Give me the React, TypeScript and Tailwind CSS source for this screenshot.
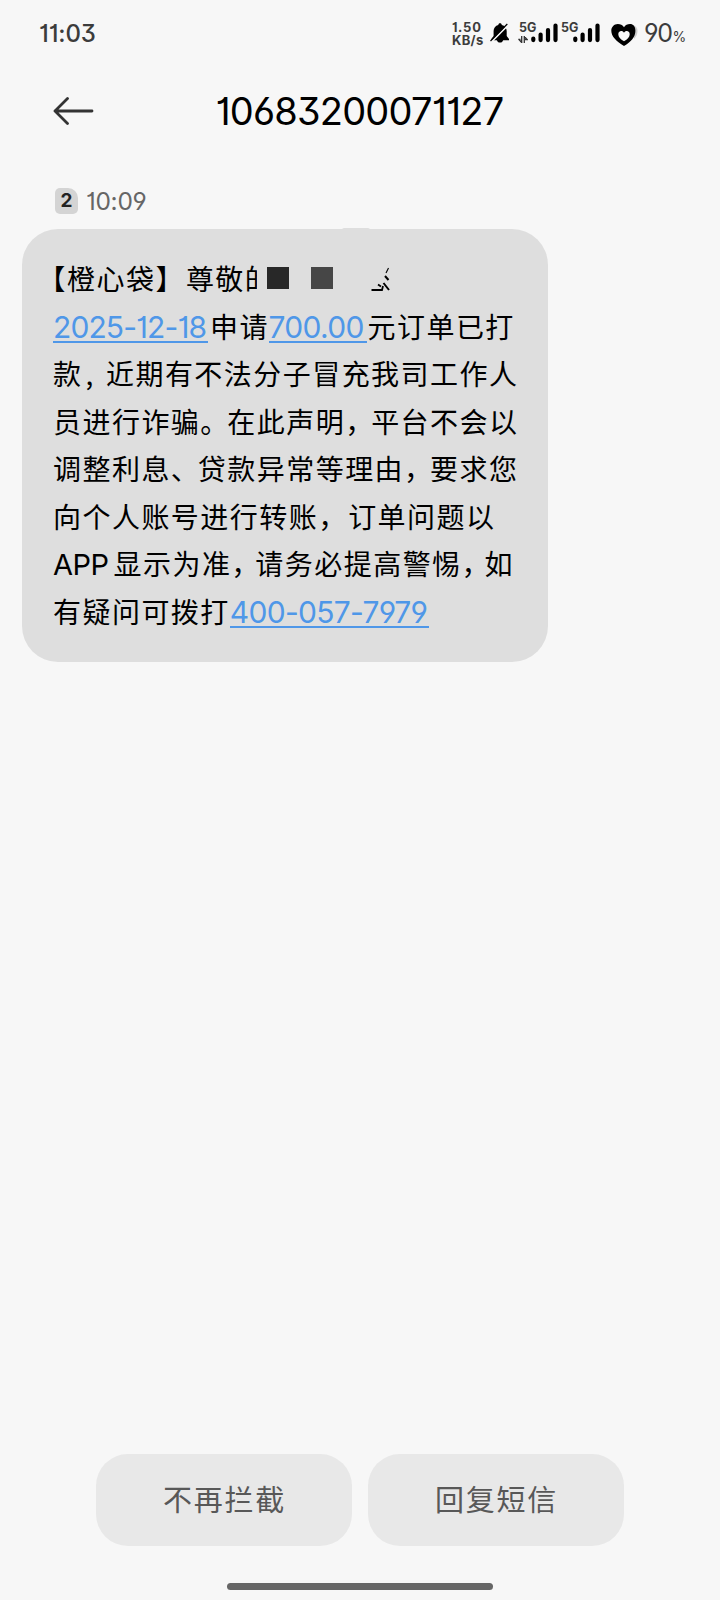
import type { ReactNode } from 'react'
import { clsx } from 'clsx'

const digits = "font-['Inter','Noto_Sans_CJK_SC',sans-serif] [font-feature-settings:'cv01','cv03','cv04','cv09']"

function BellOffIcon() {
  return (
    <svg width="20" height="20" viewBox="0 0 20 20" className="shrink-0">
      <path
        d="M10 0.3c1 0 1.700.7 1.800 1.600 3 .7 4.900 3 4.900 6v5l2.300 3v1.400H1.300v-1.400l2.300-3V8c0-3.100 1.800-5.400 4.700-6.100C8.400 1 9 .3 10 .3z"
        fill="#000"
      />
      <path d="M6.800 17h6.400c-.4 1.700-1.600 2.600-3.200 2.600S7.200 18.700 6.800 17z" fill="#000" />
      <path d="M1.200 19.200L18.800 1.400" stroke="#f7f7f7" strokeWidth="1.700" />
      <path d="M0.500 18L17.300 1" stroke="#000" strokeWidth="1.200" />
    </svg>
  )
}

function SignalBars() {
  return (
    <svg width="27" height="20" viewBox="0 0 27 20" stroke="#000" strokeWidth="4.200" strokeLinecap="round">
      <path d="M2.300 15.500v1.600M9.600 11.500v5.600M17 7v10.100M24.500 2.500v14.600" />
    </svg>
  )
}

function DataArrows() {
  return (
    <svg width="10" height="7" viewBox="0 0 10 7" fill="none" stroke="#333" strokeWidth="1.300">
      <path d="M0.300 3.300h2.200M3.700 0v7M3.700 6.500L1 3.500M6.300 7V0M6.300 .5L9.200 3.500H7" />
    </svg>
  )
}

function HeartIcon() {
  return (
    <svg width="27" height="24" viewBox="0 0 27 24" className="shrink-0">
      <path d="M22 2c3 1 4.500 3 4.500 6 0 3-1.500 6-3.500 8z" fill="#ccc" />
      <path
        d="M13 23C5.500 18.500.3 13.500.3 7.800.3 3.800 3.200 1 6.800 1c2.600 0 4.800 1.200 6.200 3.200C14.400 2.200 16.400 1 19 1c3.200 0 5.400 2.300 5.400 6.800C24.400 14 20 19 13 23z"
        fill="#000"
      />
      <path
        d="M13 18.300c-3.600-2.300-5.700-4.500-5.700-7.100 0-1.800 1.200-3.100 2.900-3.100 1.200 0 2.200.6 2.800 1.600.6-1 1.600-1.600 2.800-1.600 1.700 0 2.900 1.300 2.900 3.100 0 2.600-2.100 4.800-5.700 7.100z"
        fill="#f7f7f7"
      />
    </svg>
  )
}

function StatusBar() {
  return (
    <header className={clsx(digits, 'flex h-[66px] items-start pl-[39px] text-[#3c3c3c]')}>
      <span className="mt-[18px] w-[413px] text-[24px] leading-[31px] font-medium tracking-[-0.1px]">11:03</span>
      <div className="mt-[21px] w-[38px] text-[13px] leading-[12.5px] font-bold">
        <div className="tracking-[0.9px]">1.50</div>
        <div className="tracking-[0.3px]">KB/s</div>
      </div>
      <div className="mt-[23px] w-[28px]">
        <BellOffIcon />
      </div>
      <div className="relative mt-[23px] w-[42px] pl-[13px]">
        <SignalBars />
        <span className="absolute top-[-2px] left-[1px] text-[12.5px] leading-[14px] font-bold">5G</span>
        <span className="absolute top-[13px] left-0">
          <DataArrows />
        </span>
      </div>
      <div className="relative mt-[23px] w-[51px] pl-[12.5px]">
        <SignalBars />
        <span className="absolute top-[-2px] left-[1px] text-[12.5px] leading-[14px] font-bold">5G</span>
      </div>
      <div className="mt-[23px] w-[33px]">
        <HeartIcon />
      </div>
      <div className="mt-[18px] flex items-baseline leading-[31px]">
        <span className="w-[28.5px] text-[25px] tracking-[-1.3px]">90</span>
        <span className="text-[14px]">%</span>
      </div>
    </header>
  )
}

function TitleBar() {
  return (
    <div className="flex h-[90px] items-center pl-[53px]">
      <svg width="41" height="28" viewBox="0 0 41 28" fill="none" stroke="#333" strokeWidth="2.800" strokeLinecap="round" strokeLinejoin="round">
        <path d="M39 14H2M14.500 1.500L2 14l12.500 12.500" />
      </svg>
      <h1 className={clsx(digits, 'ml-[121.5px] text-[38px] leading-[46px] tracking-[-0.8px] text-black')}>
        10683200071127
      </h1>
    </div>
  )
}

function Line({ children }: { children: ReactNode }) {
  return <div className="flex h-[47.5px] items-center whitespace-pre">{children}</div>
}

function Gap({ className, children }: { className: string; children?: ReactNode }) {
  return <span className={clsx('shrink-0', className)}>{children}</span>
}

function LinkText({ className, children }: { className: string; children: ReactNode }) {
  return (
    <a
      className={clsx(
        digits,
        'block h-[33px] shrink-0 border-b-2 border-[#4f97e8] text-[30px] leading-[35px] text-[#4f97e8]',
        className
      )}
    >
      {children}
    </a>
  )
}

function Message() {
  return (
    <div className="relative ml-[22px] h-[433px] w-[526px] rounded-[36px] bg-[#dedede] pt-[26px] pl-[31px] font-['Noto_Sans_CJK_SC',sans-serif] text-[28px] leading-[47.5px] tracking-[1.46px] text-black">
      <span className="absolute top-[-1px] left-[320px] h-[2px] w-[28px] rounded-t-full bg-[#dedede]" />
      <Line>
        <Gap className="flex w-[14px] justify-end">【</Gap>
        橙心袋
        <Gap className="w-[30.5px]">】</Gap>
        尊敬
        <Gap className="w-[12px] overflow-hidden">的</Gap>
        <Gap className="mb-[2px] ml-[10px] size-[22px] bg-[#282828]" />
        <Gap className="mb-[2px] ml-[22px] size-[22px] bg-[#464646]" />
        <svg className="ml-[38px]" width="20" height="26" viewBox="0 0 20 26" fill="none" stroke="#000">
          <path d="M0.500 24h10.500l1-4M7 18.500l3 2" strokeWidth="1.800" />
          <path d="M14 10l3.500 4M12.500 17l5.500 7" strokeWidth="2" />
          <path d="M17.500 2l-2.500 5" strokeWidth="1.100" />
        </svg>
      </Line>
      <Line>
        <LinkText className="w-[155px] tracking-[-0.9px]">2025-12-18</LinkText>
        <Gap className="w-[60.5px] pl-[2px]">申请</Gap>
        <LinkText className="w-[98px] tracking-[-0.7px]">700.00</LinkText>
        <Gap className="pl-[1px]">元订单已打</Gap>
      </Line>
      <Line>
        款<Gap className="w-[23.5px] pl-[3px]">,</Gap>近期有不法分子冒充我司工作人
      </Line>
      <Line>
        员进行诈骗<Gap className="w-[27px]">。</Gap>在此声明<Gap className="w-[26px]">，</Gap>平台不会以
      </Line>
      <Line>
        调整利息<Gap className="w-[27px]">、</Gap>贷款异常等理由<Gap className="w-[26px]">，</Gap>要求您
      </Line>
      <Line>
        向个人账号进行转账<Gap className="w-[30px]">，</Gap>订单问题以
      </Line>
      <Line>
        <Gap className="mt-[1px] w-[60.5px] font-['Inter',sans-serif] text-[29px] tracking-[-0.5px]">APP</Gap>
        显示为准<Gap className="w-[24px]">，</Gap>请务必提高警惕<Gap className="w-[23px]">，</Gap>如
      </Line>
      <Line>
        有疑问可拨打
        <LinkText className="w-[199px] tracking-[-0.7px]">400-057-7979</LinkText>
      </Line>
    </div>
  )
}

function ActionButton({ children }: { children: ReactNode }) {
  return (
    <button className="h-[92px] w-[256px] rounded-[32px] bg-[#e8e8e8] pb-[2px] pl-[1px] text-[29px] tracking-[1.8px] text-[#585858]">
      {children}
    </button>
  )
}

export default function App() {
  return (
    <div className="flex h-[1600px] w-[720px] flex-col bg-[#f7f7f7] font-['Noto_Sans_CJK_SC',sans-serif]">
      <StatusBar />
      <TitleBar />
      <main className="flex-1 pt-[32px]">
        <div className="mb-[15px] flex h-[26px] items-center pl-[55px]">
          <span className={clsx(digits, 'flex h-[26px] w-[23px] items-center justify-center rounded-[5px] rounded-tr-[10px] bg-[#d4d4d4] text-[19px] font-bold text-[#222]')}>
            2
          </span>
          <span className={clsx(digits, 'ml-[8px] text-[24.5px] leading-[26px] tracking-[-0.3px] text-[#666]')}>10:09</span>
        </div>
        <Message />
      </main>
      <div className="flex justify-center gap-4">
        <ActionButton>不再拦截</ActionButton>
        <ActionButton>回复短信</ActionButton>
      </div>
      <div className="mx-auto mt-[37px] mb-[10px] h-[7px] w-[266px] rounded-full bg-[#666]" />
    </div>
  )
}
